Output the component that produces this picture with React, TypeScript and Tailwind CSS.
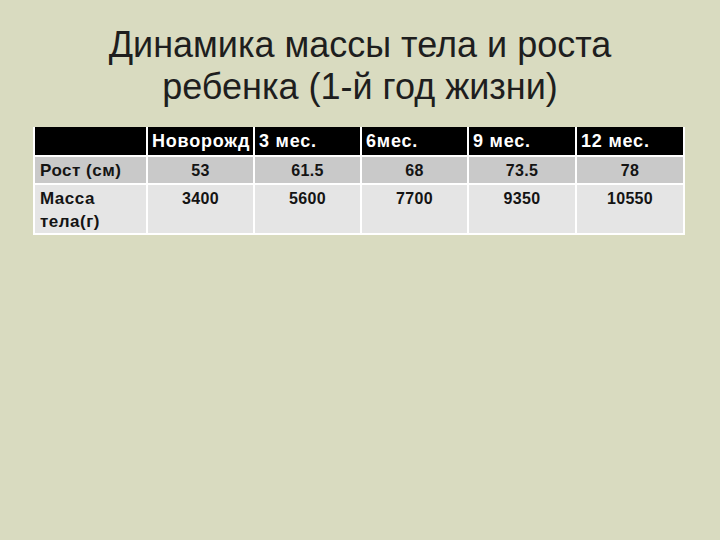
const cols = ["Новорожд", "3 мес.", "6мес.", "9 мес.", "12 мес."];
const rows = [
  { label: "Рост (см)", values: ["53", "61.5", "68", "73.5", "78"], tall: false },
  { label: "Масса тела(г)", values: ["3400", "5600", "7700", "9350", "10550"], tall: true },
];
const widths = ["w-[113px]", "w-[107px]", "w-[107px]", "w-[107px]", "w-[108px]", "w-[108px]"];

export default function App() {
  return (
    <div
      className="w-[720px] h-[540px] bg-[#d9dbc0] flex flex-col items-center overflow-hidden"
      style={{ fontFamily: '"Liberation Sans", Arial, sans-serif' }}
    >
      <h1 className="mt-[24px] text-[36px] leading-[42px] text-[#1e1e1e] text-center">
        Динамика массы тела и роста
        <br />
        ребенка (1-й год жизни)
      </h1>
      <table className="mt-[19px] ml-[-2px] border-collapse table-fixed w-[650px]">
        <thead>
          <tr className="bg-black h-[29px]">
            <th className={`${widths[0]} border-x-2 border-white`} />
            {cols.map((c, i) => (
              <th
                key={c}
                className={`${widths[i + 1]} border-x-2 border-white text-left pl-[4px] text-white text-[18px] tracking-[0.8px] font-bold whitespace-nowrap`}
              >
                {c}
              </th>
            ))}
          </tr>
        </thead>
        <tbody>
          {rows.map((r, ri) => (
            <tr
              key={r.label}
              className={
                ri === 0
                  ? "bg-[#c9c9c9] h-[28px] border-t-2 border-white"
                  : "bg-[#e5e5e5] h-[50px] border-t-2 border-white"
              }
            >
              <td
                className={`border-2 border-white pl-[5px] text-[17px] tracking-[0.5px] font-bold text-[#141414] leading-[23px] ${
                  r.tall ? "align-top pt-[2px] pr-[30px]" : "align-middle"
                }`}
              >
                {r.label}
              </td>
              {r.values.map((v, i) => (
                <td
                  key={i}
                  className={`border-2 border-white text-center text-[16px] tracking-[0.3px] font-bold text-[#141414] leading-[23px] ${
                    r.tall ? "align-top pt-[2px]" : "align-middle"
                  }`}
                >
                  {v}
                </td>
              ))}
            </tr>
          ))}
        </tbody>
      </table>
    </div>
  );
}
